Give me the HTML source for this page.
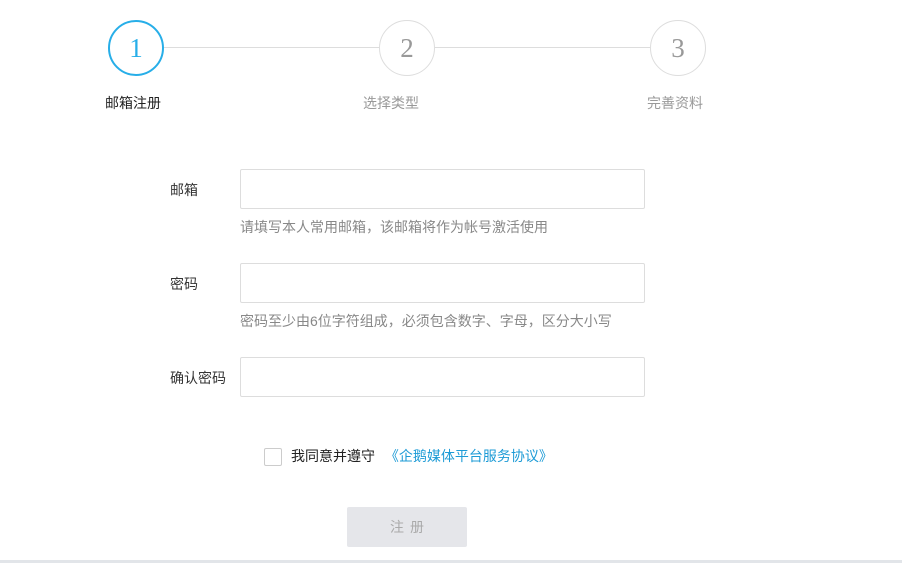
<!DOCTYPE html><html><head><meta charset="utf-8"><style>
body{margin:0;width:902px;height:563px;background:#fff;position:relative;overflow:hidden;font-family:"Liberation Sans","Noto Sans CJK SC",sans-serif;font-size:14px}
.a{position:absolute}
.c{position:absolute;width:56px;height:56px;border-radius:50%;border:1px solid #ddd;box-sizing:border-box;text-align:center;line-height:54px;font-family:"Liberation Serif",serif;font-size:27px;color:#999;background:#fff}
.ln{position:absolute;top:47px;height:1px;background:#ddd}
.inp{position:absolute;left:240px;width:405px;height:40px;border:1px solid #ddd;box-sizing:border-box;border-radius:2px}
.lb{position:absolute;left:170px;color:#333}
.h{position:absolute;left:240px;color:#888}
</style></head><body>
<div class="ln" style="left:164px;width:215px"></div>
<div class="ln" style="left:435px;width:215px"></div>
<div class="c" style="left:108px;top:20px;border:2px solid #27aee8;color:#27aee8;line-height:52px">1</div>
<div class="c" style="left:379px;top:20px">2</div>
<div class="c" style="left:650px;top:20px">3</div>
<div class="a" style="left:105px;top:93px;color:#222">邮箱注册</div>
<div class="a" style="left:363px;top:93px;color:#999">选择类型</div>
<div class="a" style="left:647px;top:93px;color:#999">完善资料</div>
<div class="lb" style="top:180px">邮箱</div>
<div class="inp" style="top:169px"></div>
<div class="h" style="top:217px">请填写本人常用邮箱，该邮箱将作为帐号激活使用</div>
<div class="lb" style="top:274px">密码</div>
<div class="inp" style="top:263px"></div>
<div class="h" style="top:311px">密码至少由6位字符组成，必须包含数字、字母，区分大小写</div>
<div class="lb" style="top:368px">确认密码</div>
<div class="inp" style="top:357px"></div>
<div class="a" style="left:264px;top:448px;width:18px;height:18px;border:1px solid #ccc;box-sizing:border-box;border-radius:2px"></div>
<div class="a" style="left:291px;top:446px;color:#222">我同意并遵守 <span style="color:#1d9bd6;margin-left:6px">《企鹅媒体平台服务协议》</span></div>
<div class="a" style="left:347px;top:507px;width:120px;height:40px;background:#e5e6ea;border-radius:2px;color:#aaa;text-align:center;line-height:40px;font-size:14px;letter-spacing:6px;text-indent:6px">注册</div>
<div class="a" style="left:0;top:560px;width:902px;height:3px;background:#e2e5e9"></div>
</body></html>
